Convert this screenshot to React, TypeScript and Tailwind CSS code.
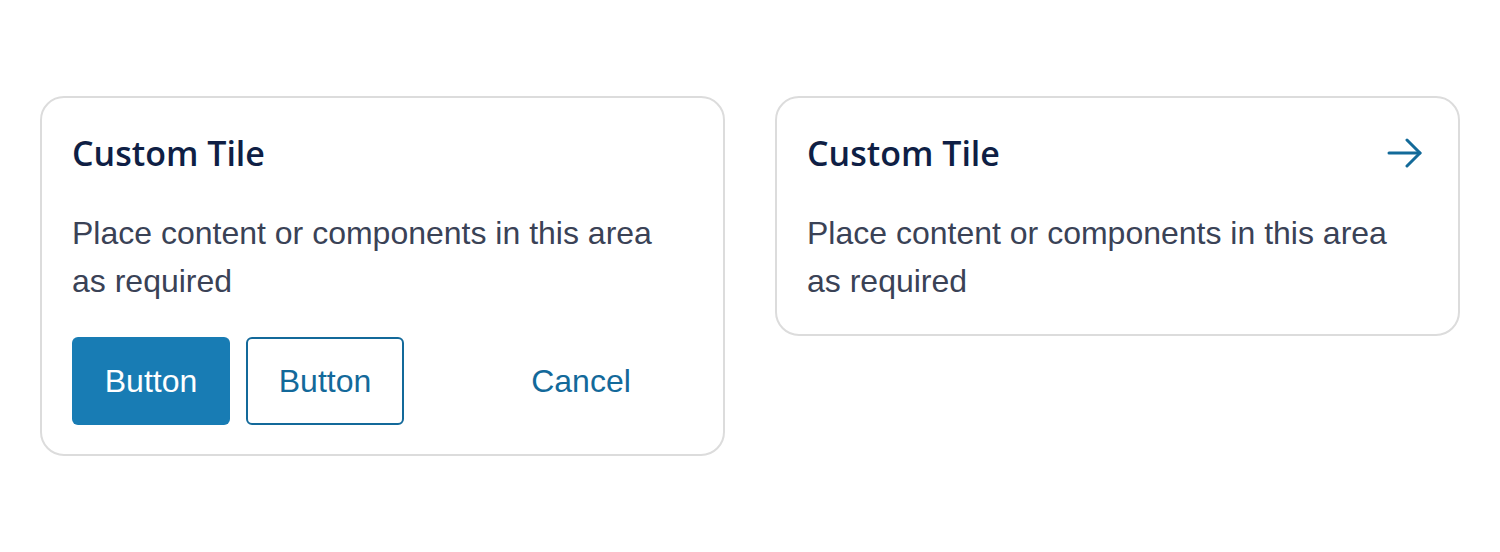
import React from 'react';

const ArrowIcon = () => (
  <svg width="36" height="30" viewBox="0 0 36 30" fill="none" stroke="#136a99" strokeWidth="3" strokeLinecap="round" strokeLinejoin="round">
    <path d="M2 15H33" />
    <path d="M20 2L33 15L20 28" />
  </svg>
);

const Tile = ({ withArrow, children }: { withArrow?: boolean; children?: React.ReactNode }) => (
  <div className="flex-1 self-start rounded-[24px] border-2 border-[#dcdcdc] bg-white px-[30px] pt-[31px] pb-[29px]">
    <div className="flex h-12 items-center justify-between">
      <h2 className="text-[34px] font-semibold text-[#0f1f45] [font-family:'Open_Sans',sans-serif]">Custom Tile</h2>
      {withArrow && (
        <span className="mr-[5px]">
          <ArrowIcon />
        </span>
      )}
    </div>
    <p className="mt-8 text-[32px] leading-[48px] text-[#3a4256]">
      Place content or components in this area as required
    </p>
    {children}
  </div>
);

export default function App() {
  return (
    <div className="flex h-[552px] gap-[50px] bg-white px-10 pt-24 [font-family:'Liberation_Sans',Arial,sans-serif]">
      <Tile>
        <div className="mt-8 flex items-center gap-4">
          <button className="h-[88px] w-[158px] rounded-md bg-[#187cb4] text-[32px] text-white">Button</button>
          <button className="h-[88px] w-[158px] rounded-md border-2 border-[#13699a] text-[32px] text-[#13699a]">Button</button>
          <button className="ml-auto h-[88px] w-[224px] text-[32px] text-[#13699a]">Cancel</button>
        </div>
      </Tile>
      <Tile withArrow />
    </div>
  );
}
